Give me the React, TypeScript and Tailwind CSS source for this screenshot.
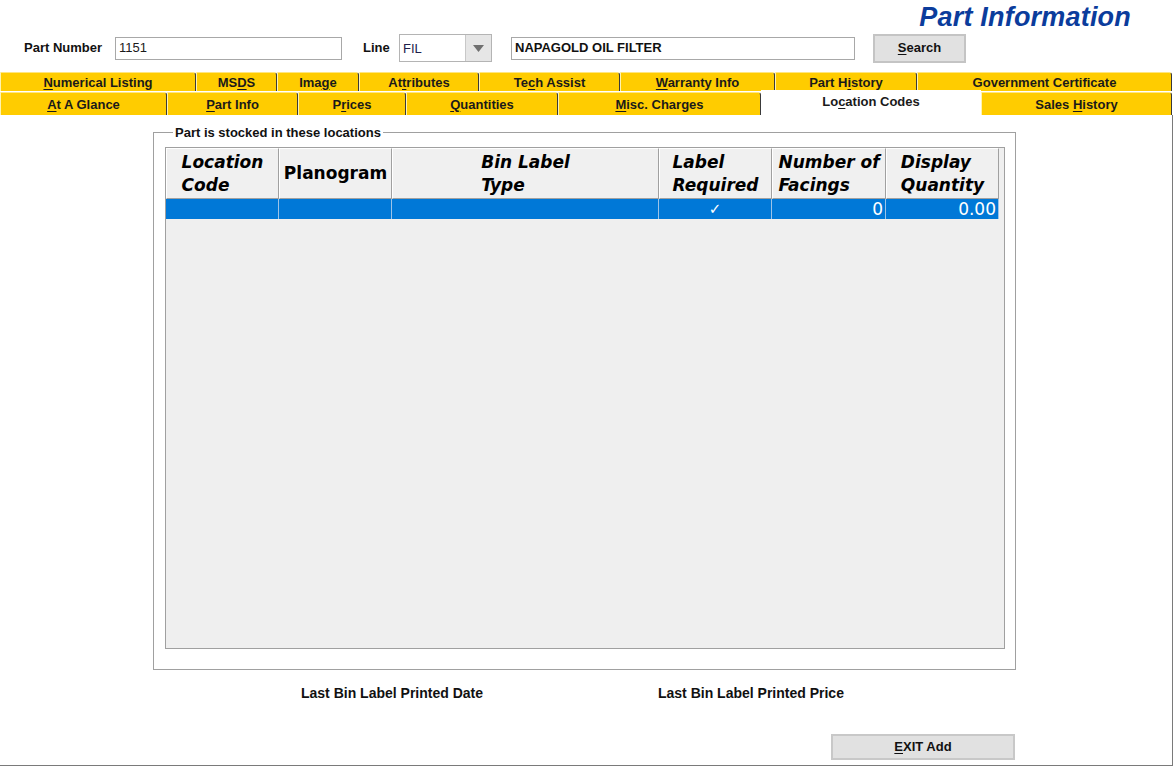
import React from "react";

type Tab = { label: string; u: number; w: number; active?: boolean };

const ROW1: Tab[] = [
  { label: "Numerical Listing", u: 0, w: 196 },
  { label: "MSDS", u: 2, w: 81 },
  { label: "Image", u: 3, w: 82 },
  { label: "Attributes", u: 2, w: 120 },
  { label: "Tech Assist", u: 2, w: 141 },
  { label: "Warranty Info", u: 0, w: 155 },
  { label: "Part History", u: 6, w: 142 },
  { label: "Government Certificate", u: -1, w: 255 },
];

const ROW2: Tab[] = [
  { label: "At A Glance", u: 0, w: 167 },
  { label: "Part Info", u: 0, w: 131 },
  { label: "Prices", u: 1, w: 108 },
  { label: "Quantities", u: 0, w: 152 },
  { label: "Misc. Charges", u: 0, w: 203 },
  { label: "Location Codes", u: 2, w: 220, active: true },
  { label: "Sales History", u: 6, w: 191 },
];

// header columns: widths include the 1px right border
const COLS = [
  { lines: ["Location", "Code"], w: 113, italic: true },
  { lines: ["Planogram"], w: 113, italic: false },
  { lines: ["Bin Label", "Type"], w: 267, italic: true },
  { lines: ["Label", "Required"], w: 113, italic: true },
  { lines: ["Number of", "Facings"], w: 114, italic: true },
  { lines: ["Display", "Quantity"], w: 113, italic: true },
];

function Mnemonic({ text, u }: { text: string; u: number }) {
  if (u < 0) return <span>{text}</span>;
  return (
    <span className="whitespace-pre">
      {text.slice(0, u)}
      <span className="underline underline-offset-2">{text[u]}</span>
      {text.slice(u + 1)}
    </span>
  );
}

function TabButton({ tab, h }: { tab: Tab; h: string }) {
  if (tab.active) {
    return (
      <div
        style={{ width: tab.w }}
        className="h-[25px] bg-white flex items-start justify-center pt-[4px] text-[13px] font-bold text-[#1a1a1a] leading-[15px]"
      >
        <Mnemonic text={tab.label} u={tab.u} />
      </div>
    );
  }
  return (
    <div
      style={{ width: tab.w }}
      className={`${h} bg-[#ffcc00] border-l border-t border-l-[#fff3b0] border-t-[#ffe680] border-r border-r-[#3a3a3a] rounded-tr-[3px] flex items-center justify-center text-[13px] font-bold text-[#1a1a1a] leading-[15px]`}
    >
      <Mnemonic text={tab.label} u={tab.u} />
    </div>
  );
}

export default function App() {
  return (
    <div
      className="w-[1174px] h-[767px] bg-white overflow-hidden flex flex-col"
      style={{ fontFamily: '"Liberation Sans", Arial, sans-serif' }}
    >
      {/* Title */}
      <div className="h-[34px] pt-[3px] flex justify-end pr-[43px]">
        <span className="text-[27px] leading-[28px] font-bold italic text-[#0b3c9c] tracking-[0.2px]">
          Part Information
        </span>
      </div>

      {/* Part lookup row */}
      <div className="h-[28px] flex items-center text-[13px]">
        <span className="ml-[24px] w-[91px] font-bold text-[#111]">Part Number</span>
        <div className="w-[227px] h-[23px] border border-[#a8a8a8] flex items-center pl-[3px] text-[#1a1a1a]">
          1151
        </div>
        <span className="ml-[21px] w-[36px] font-bold text-[#111]">Line</span>
        <div className="w-[93px] h-[28px] border border-[#b4b4b4] flex bg-white">
          <div className="flex-1 flex items-center pl-[3px] pt-[2px] text-[#20204a]">FIL</div>
          <div className="w-[26px] h-full bg-[#e6e6e6] border-l border-[#c8c8c8] flex items-center justify-center">
            <svg width="11" height="7" viewBox="0 0 11 7">
              <path d="M0 0 L11 0 L5.5 7 Z" fill="#707070" />
            </svg>
          </div>
        </div>
        <div className="ml-[19px] w-[344px] h-[23px] border border-[#a8a8a8] flex items-center pl-[3px] font-bold text-[#111]">
          NAPAGOLD OIL FILTER
        </div>
        <div className="ml-[18px] w-[93px] h-[29px] border-2 border-[#c4c4c4] bg-[#e1e1e1] flex items-center justify-center font-bold text-[#111]">
          <Mnemonic text="Search" u={0} />
        </div>
      </div>

      {/* Tabs */}
      <div className="mt-[10px] h-[19px] flex">
        {ROW1.map((t) => (
          <TabButton key={t.label} tab={t} h="h-[19px]" />
        ))}
      </div>
      <div className="mt-[1px] h-[23px] flex items-end">
        {ROW2.map((t) => (
          <TabButton key={t.label} tab={t} h="h-[23px]" />
        ))}
      </div>

      {/* Panel */}
      <div className="w-[1173px] h-[651px] border-r border-b border-[#7a7a7a] flex flex-col">
        <fieldset className="mt-[10px] ml-[153px] w-[863px] border border-[#a0a0a0] pt-[7px] pl-[11px] pr-[10px] pb-[20px]">
          <legend className="ml-[8px] px-[2px] text-[13px] leading-[15px] font-bold text-[#111]">
            Part is stocked in these locations
          </legend>

          <div className="w-[840px] h-[502px] border border-[#a0a0a0] bg-[#efefef]">
            <div className="flex">
              {COLS.map((c) => (
                <div
                  key={c.lines[0]}
                  style={{ width: c.w }}
                  className="h-[51px] bg-[#f0f0f0] border-t border-l border-t-white border-l-white border-r border-b border-r-[#a0a0a0] border-b-[#a0a0a0] flex items-center justify-center"
                >
                  <div
                    className={`text-left text-[17px] leading-[23px] font-bold text-black ${c.italic ? "italic" : ""}`}
                    style={{ fontFamily: '"DejaVu Sans", Verdana, sans-serif' }}
                  >
                    {c.lines.map((l) => (
                      <div key={l}>{l}</div>
                    ))}
                  </div>
                </div>
              ))}
            </div>
            <div
              className="flex h-[21px] text-white text-[17px] leading-[20px]"
              style={{ fontFamily: '"DejaVu Sans", Verdana, sans-serif' }}
            >
              {COLS.map((c, i) => (
                <div
                  key={c.lines[0]}
                  style={{ width: c.w }}
                  className="h-[20px] bg-[#0078d7] border-r border-[#9cc3e8] flex items-center px-[2px]"
                >
                  {i === 3 && <span className="w-full text-center text-[15px]">✓</span>}
                  {i === 4 && <span className="w-full text-right">0</span>}
                  {i === 5 && <span className="w-full text-right">0.00</span>}
                </div>
              ))}
            </div>
          </div>
        </fieldset>

        {/* Last printed labels */}
        <div className="mt-[16px] flex text-[14px] leading-[15px] font-bold text-[#111]">
          <span className="ml-[301px] w-[357px]">Last Bin Label Printed Date</span>
          <span>Last Bin Label Printed Price</span>
        </div>

        <div className="mt-[33px] ml-[831px] w-[184px] h-[26px] border-2 border-[#c8c8c8] bg-[#e1e1e1] flex items-center justify-center text-[13px] font-bold text-[#111]">
          <Mnemonic text="EXIT Add" u={0} />
        </div>
      </div>
    </div>
  );
}
